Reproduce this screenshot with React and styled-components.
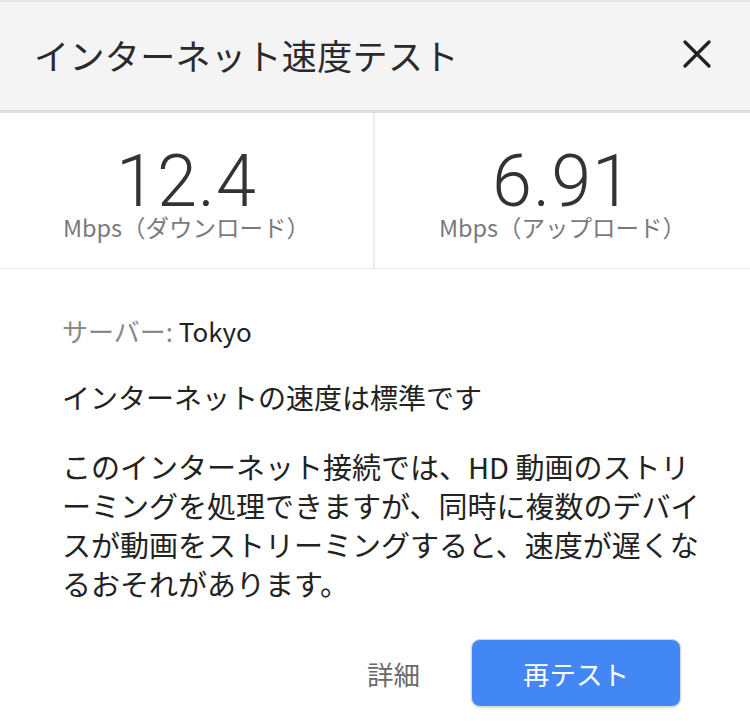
import styled, { createGlobalStyle } from 'styled-components';

const Global = createGlobalStyle`
  html, body {
    margin: 0;
    padding: 0;
    background: #fff;
  }
  body {
    font-family: "Noto Sans CJK JP", "Noto Sans", sans-serif;
  }
`;

const Dialog = styled.div`
  width: 750px;
  height: 725px;
  overflow: hidden;
  background: #fff;
  color: #222;
`;

const Header = styled.header`
  height: 113px;
  box-sizing: border-box;
  background: #f4f4f4;
  border-top: 2px solid #e4e4e4;
  border-bottom: 3px solid #dedede;
  display: flex;
  align-items: center;
  justify-content: space-between;
  padding: 0 38px 4px 34px;
`;

const Title = styled.h1`
  margin: 0;
  font-size: 35px;
  font-weight: 400;
  color: #2a2a2a;
  letter-spacing: 0.4px;
`;

const Close = styled.button`
  border: 0;
  background: none;
  padding: 0;
  width: 30px;
  height: 30px;
  display: flex;
  align-items: center;
  justify-content: center;
`;

const Stats = styled.div`
  display: grid;
  grid-template-columns: 375px 1fr;
  height: 156px;
  box-sizing: border-box;
  border-bottom: 1px solid #e6e6e6;
`;

const Stat = styled.div`
  display: flex;
  flex-direction: column;
  align-items: center;
  padding-top: 37px;
  border-right: ${({ $divider }) => ($divider ? '2px solid #ececec' : 'none')};
`;

const Value = styled.div`
  font-family: Roboto, "Liberation Sans", sans-serif;
  font-weight: 300;
  font-size: 72px;
  line-height: 64px;
  color: #333;
  letter-spacing: 1px;
`;

const Unit = styled.div`
  font-size: 23.5px;
  line-height: 26px;
  color: #7a7a7a;
`;

const Body = styled.div`
  padding: 45px 43px 0 62px;
`;

const Server = styled.div`
  font-size: 26px;
  line-height: 34px;
  margin-bottom: 31px;
`;

const ServerLabel = styled.span`
  color: #8a8a8a;
`;

const Status = styled.p`
  margin: 0 0 32px;
  font-size: 28px;
  line-height: 36px;
`;

const Description = styled.p`
  margin: 0;
  font-size: 29px;
  line-height: 39px;
  color: #222;
  line-break: loose;
`;

const Actions = styled.div`
  display: flex;
  justify-content: flex-end;
  align-items: center;
  gap: 51px;
  margin-top: 36px;
  margin-right: 26px;
`;

const LinkButton = styled.button`
  border: 0;
  background: none;
  font-family: inherit;
  font-size: 26.5px;
  color: #6a6a6a;
  padding: 0;
`;

const Primary = styled.button`
  width: 210px;
  height: 68px;
  border: 1px solid #d8d8d8;
  border-radius: 9px;
  background: #4287f4;
  color: #fff;
  font-family: inherit;
  font-size: 26.5px;
  box-shadow: 0 1px 2px rgba(0, 0, 0, 0.15);
`;

export default function App() {
  return (
    <>
      <Global />
      <Dialog>
        <Header>
          <Title>インターネット速度テスト</Title>
          <Close aria-label="閉じる">
            <svg width="28" height="28" viewBox="0 0 28 28">
              <path d="M2 2 L26 26 M26 2 L2 26" stroke="#222" strokeWidth="3.2" strokeLinecap="round" />
            </svg>
          </Close>
        </Header>
        <Stats>
          <Stat $divider>
            <Value>12.4</Value>
            <Unit>Mbps（ダウンロード）</Unit>
          </Stat>
          <Stat>
            <Value>6.91</Value>
            <Unit>Mbps（アップロード）</Unit>
          </Stat>
        </Stats>
        <Body>
          <Server>
            <ServerLabel>サーバー: </ServerLabel>Tokyo
          </Server>
          <Status>インターネットの速度は標準です</Status>
          <Description>
            このインターネット接続では、HD 動画のストリーミングを処理できますが、同時に複数のデバイスが動画をストリーミングすると、速度が遅くなるおそれがあります。
          </Description>
          <Actions>
            <LinkButton>詳細</LinkButton>
            <Primary>再テスト</Primary>
          </Actions>
        </Body>
      </Dialog>
    </>
  );
}
